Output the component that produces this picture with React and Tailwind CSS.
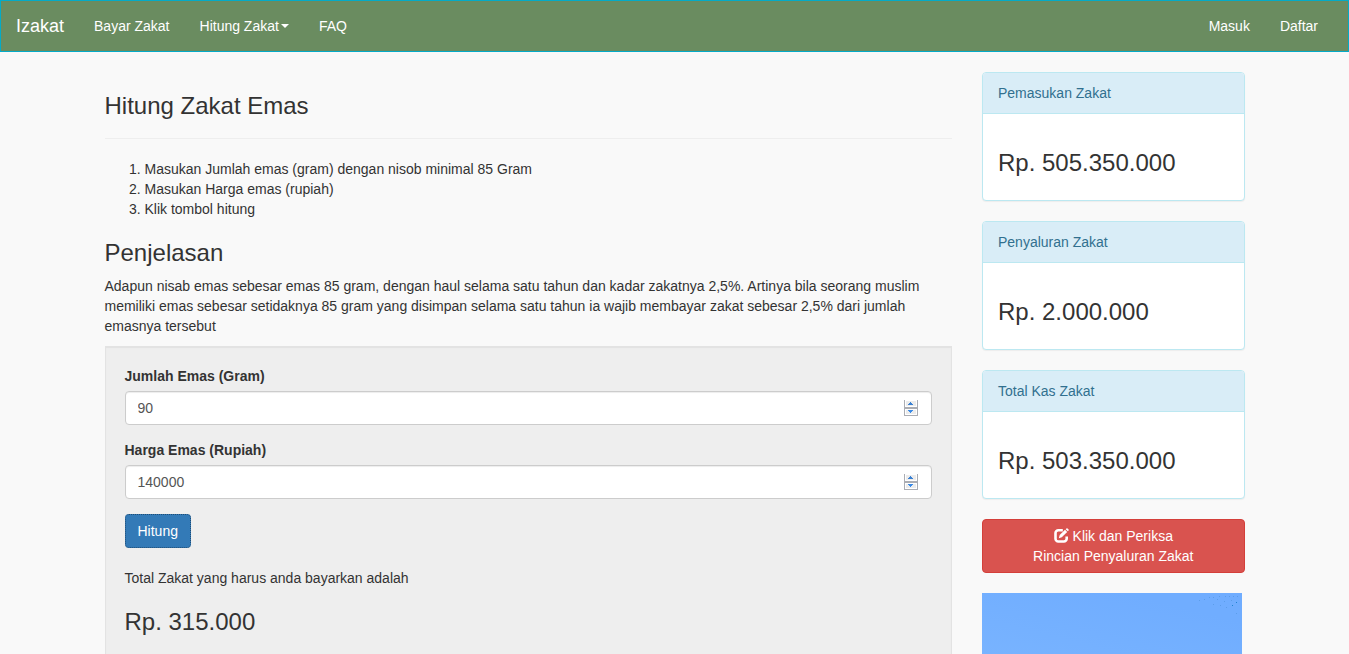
import { useState } from 'react'

const totals = [
  { title: 'Pemasukan Zakat', amount: 505350000 },
  { title: 'Penyaluran Zakat', amount: 2000000 },
  { title: 'Total Kas Zakat', amount: 503350000 },
]

const formatRupiah = (value) => `Rp. ${String(Math.round(value)).replace(/\B(?=(\d{3})+$)/g, '.')}`

function EditIcon() {
  return (
    <svg className="mr-1 inline-block size-[15px] align-[-2px]" viewBox="0 0 15 15" aria-hidden="true">
      <path
        d="M8.8 2.3H4.3A2.8 2.8 0 0 0 1.5 5.100v5.600A2.8 2.8 0 0 0 4.3 13.500h5.600a2.800 2.800 0 0 0 2.800-2.800V8.600"
        fill="none"
        stroke="currentColor"
        strokeWidth="2.6"
      />
      <path d="M11 1.800l2.200 2.200-5.400 5.300-3 .9.900-3.100z" fill="currentColor" />
      <path d="M11.700 1.200l.8-.8c.3-.3.7-.3 1 0l1.100 1.100c.3.300.3.700 0 1l-.8.800z" fill="currentColor" />
    </svg>
  )
}

function SpinnerIcon() {
  return (
    <svg
      className="pointer-events-none absolute top-[9px] right-[14px] h-4 w-[14px]"
      viewBox="0 0 14 16"
      shapeRendering="crispEdges"
      aria-hidden="true"
    >
      <rect x="0" y="0" width="14" height="16" fill="#abadb3" />
      <rect x="1" y="0" width="12" height="7" fill="#fff" />
      <rect x="2" y="1" width="10" height="5" fill="#ececec" />
      <rect x="1" y="9" width="12" height="6" fill="#fff" />
      <rect x="2" y="10" width="10" height="4" fill="#ececec" />
      <path d="M6 2h1v1h1v1h1v1H4V4h1V3h1z" fill="#3a80d2" />
      <path d="M4 10h5v1H8v1H7v1H6v-1H5v-1H4z" fill="#3a8ae6" />
    </svg>
  )
}

function NumberField({ id, label, value, onChange }) {
  return (
    <div className="mb-[15px]">
      <label htmlFor={id} className="mb-[5px] block font-bold">
        {label}
      </label>
      <div className="relative">
        <input
          id={id}
          type="number"
          value={value}
          onChange={(e) => onChange(e.target.value)}
          className="block h-[34px] w-full appearance-none rounded border border-[#ccc] bg-white px-3 text-[#555] shadow-[inset_0_1px_1px_rgba(0,0,0,0.075)] outline-none [appearance:textfield] [&::-webkit-inner-spin-button]:appearance-none"
        />
        <SpinnerIcon />
      </div>
    </div>
  )
}

function Navbar() {
  return (
    <nav className="flex justify-between border border-[#04abc7] bg-[#6a8c60] leading-5 text-white">
      <div className="flex">
        <a href="#" className="p-[15px] text-lg leading-5">
          Izakat
        </a>
        <a href="#bayar" className="p-[15px]">
          Bayar Zakat
        </a>
        <a href="#hitung" className="flex items-center p-[15px]">
          Hitung Zakat
          <span className="ml-0.5 border-x-4 border-t-4 border-x-transparent border-t-white" />
        </a>
        <a href="#faq" className="p-[15px]">
          FAQ
        </a>
      </div>
      <div className="flex pr-[15px]">
        <a href="#masuk" className="p-[15px]">
          Masuk
        </a>
        <a href="#daftar" className="p-[15px]">
          Daftar
        </a>
      </div>
    </nav>
  )
}

export default function App() {
  const [jumlah, setJumlah] = useState('90')
  const [harga, setHarga] = useState('140000')
  const [hasil, setHasil] = useState(315000)

  const handleSubmit = (e) => {
    e.preventDefault()
    setHasil(Number(jumlah) * Number(harga) * 0.025)
  }

  return (
    <div className="h-screen overflow-hidden bg-[#f9f9f9] font-['Liberation_Sans',Arial,sans-serif] text-[14px] leading-5 text-[#333]">
      <Navbar />

      <div className="mx-auto grid max-w-[1170px] grid-cols-4 pt-5">
        <main className="col-span-3 px-[15px]">
          <h3 className="mt-5 text-2xl leading-[27px]">Hitung Zakat Emas</h3>
          <hr className="mt-[19px] mb-5 border-[#eee]" />
          <ol className="list-decimal pl-10">
            <li>Masukan Jumlah emas (gram) dengan nisob minimal 85 Gram</li>
            <li>Masukan Harga emas (rupiah)</li>
            <li>Klik tombol hitung</li>
          </ol>

          <h3 className="mt-5 mb-[10px] text-2xl leading-[27px]">Penjelasan</h3>
          <p className="mb-[10px]">
            Adapun nisab emas sebesar emas 85 gram, dengan haul selama satu tahun dan kadar zakatnya 2,5%. Artinya bila
            seorang muslim memiliki emas sebesar setidaknya 85 gram yang disimpan selama satu tahun ia wajib membayar
            zakat sebesar 2,5% dari jumlah emasnya tersebut
          </p>

          {/* Kalkulator */}
          <form
            onSubmit={handleSubmit}
            className="border border-[#e3e3e3] bg-[#eee] p-[19px] pb-10 shadow-[inset_0_1px_1px_rgba(0,0,0,0.05)]"
          >
            <NumberField id="jumlah" label="Jumlah Emas (Gram)" value={jumlah} onChange={setJumlah} />
            <NumberField id="harga" label="Harga Emas (Rupiah)" value={harga} onChange={setHarga} />
            <button
              type="submit"
              className="rounded border border-dotted border-[#204d74] bg-[#337ab7] px-3 py-[6px] text-white"
            >
              Hitung
            </button>
            <p className="mt-5">Total Zakat yang harus anda bayarkan adalah</p>
            <h3 className="mt-5 text-2xl leading-[27px]">{formatRupiah(hasil)}</h3>
          </form>
        </main>

        <aside className="px-[15px]">
          {totals.map((item) => (
            <section
              key={item.title}
              className="mb-5 overflow-hidden rounded border border-[#bce8f1] bg-white shadow-[0_1px_1px_rgba(0,0,0,0.05)]"
            >
              <div className="border-b border-[#bce8f1] bg-[#d9edf7] px-[15px] py-[10px] text-[#31708f]">
                {item.title}
              </div>
              <div className="px-[15px] pt-[35px] pb-6">
                <h3 className="text-2xl leading-[27px]">{formatRupiah(item.amount)}</h3>
              </div>
            </section>
          ))}

          <button
            type="button"
            className="mb-5 block w-full rounded border border-[#d43f3a] bg-[#d9534f] px-3 py-[6px] text-center text-white"
          >
            <EditIcon />
            Klik dan Periksa
            <br />
            Rincian Penyaluran Zakat
          </button>

          {/* Banner */}
          <svg className="block h-[260px] w-[260px]" viewBox="0 0 260 260" aria-hidden="true">
            <defs>
              <linearGradient id="sky" x1="0.55" y1="0" x2="0.45" y2="0.4">
                <stop offset="0" stopColor="#70adff" />
                <stop offset="1" stopColor="#79b4ff" />
              </linearGradient>
            </defs>
            <rect width="260" height="260" fill="url(#sky)" />
            <g fill="#5b9dea">
              <rect x="217" y="7" width="1" height="1" />
              <rect x="222" y="6" width="1" height="1" />
              <rect x="227" y="4" width="1" height="1" />
              <rect x="231" y="4" width="1" height="1" />
              <rect x="235" y="6" width="1" height="1" />
              <rect x="237" y="3" width="1" height="1" />
              <rect x="243" y="3" width="1" height="1" />
              <rect x="247" y="3" width="1" height="1" />
              <rect x="251" y="3" width="1" height="1" />
              <rect x="255" y="3" width="1" height="1" />
              <rect x="231" y="11" width="1" height="1" />
              <rect x="238" y="12" width="1" height="1" />
              <rect x="242" y="8" width="1" height="1" />
              <rect x="244" y="14" width="1" height="1" />
              <rect x="249" y="7" width="1" height="1" />
              <rect x="254" y="20" width="1" height="1" />
            </g>
            <g fill="#1f83d0">
              <rect x="250" y="12" width="1" height="1" />
              <rect x="254" y="9" width="1" height="1" />
            </g>
          </svg>
        </aside>
      </div>
    </div>
  )
}
